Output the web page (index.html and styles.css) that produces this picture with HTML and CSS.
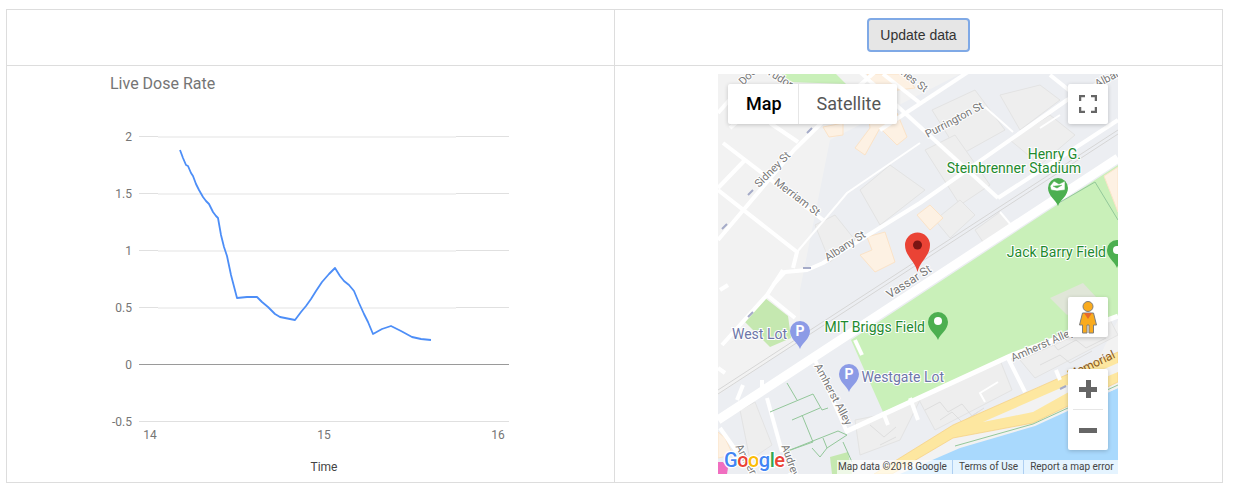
FILE: index.html
```html
<!DOCTYPE html>
<html lang="en">
<head>
    <meta charset="UTF-8">
    <title>Live Dose Rate</title>
    <link rel="stylesheet" href="styles.css">
</head>
<body>
    <table class="layout">
        <tr>
            <td></td>
            <td><button class="btn" type="button">Update data</button></td>
        </tr>
        <tr>
            <td>
                <!-- viewBox uses page coordinates so the chart is easy to read off the design -->
                <svg class="chart" viewBox="60 74 500 400" width="500" height="400">
                    <text class="chart-title" x="110" y="89">Live Dose Rate</text>

                    <g class="grid">
                        <line x1="139" y1="136.5" x2="509" y2="136.5"/>
                        <line x1="139" y1="193.5" x2="509" y2="193.5"/>
                        <line x1="139" y1="250.5" x2="509" y2="250.5"/>
                        <line x1="139" y1="307.5" x2="509" y2="307.5"/>
                        <line x1="139" y1="421.5" x2="509" y2="421.5"/>
                    </g>
                    <g class="grid-inner">
                        <line x1="158" y1="137" x2="456" y2="137"/>
                        <line x1="158" y1="194" x2="456" y2="194"/>
                        <line x1="158" y1="251" x2="456" y2="251"/>
                        <line x1="158" y1="308" x2="456" y2="308"/>
                    </g>
                    <line class="baseline" x1="139" y1="364.5" x2="509" y2="364.5"/>

                    <g class="tick y-tick">
                        <text x="132" y="141">2</text>
                        <text x="132" y="198">1.5</text>
                        <text x="132" y="255">1</text>
                        <text x="132" y="312">0.5</text>
                        <text x="132" y="369">0</text>
                        <text x="132" y="426">-0.5</text>
                    </g>
                    <g class="tick x-tick">
                        <text x="150" y="439">14</text>
                        <text x="324" y="439">15</text>
                        <text x="498" y="439">16</text>
                    </g>
                    <text class="axis-title" x="324" y="471">Time</text>

                    <polyline class="series" points="180,150 183,158 186,165 188,166 191,173 193,176 196,184 199,190 203,197 206,201 209,204 213,212 216,216 218,218 221,235 224,247 227,256 231,275 237,298 247,297 257,297 262,302 268,307 275,314 280,317 295,320 301,312 306,306 311,299 316,291 322,282 329,274 335,268 340,276 344,281 349,285 354,291 359,303 364,314 368,322 373,334 382,329 391,326 401,331 412,337 421,339 431,340"/>
                </svg>
            </td>
            <td>
                <div class="map">
                    <svg class="map-canvas" viewBox="718 74 400 400" width="400" height="400">
                        <defs>
                            <path id="pin" d="M0 18C-2 12-10 8-10 0A10 10 0 0 1 10 0C10 8 2 12 0 18Z"/>
                        </defs>

                        <!-- ground -->
                        <rect class="land" x="718" y="74" width="400" height="400"/>
                        <polygon class="campus" points="800,290 830,140 960,74 1118,74 1118,320 1040,474 718,474 718,395 800,340"/>

                        <!-- buildings -->
                        <g class="building">
                            <polygon points="860,190 890,165 925,190 880,225"/>
                            <polygon points="815,225 835,215 855,240 830,262"/>
                            <polygon points="932,110 975,90 1005,130 960,155"/>
                            <polygon points="925,150 955,135 990,185 960,205"/>
                            <polygon points="1000,95 1040,85 1060,100 1020,130"/>
                            <polygon points="1010,140 1050,115 1075,135 1040,165"/>
                            <polygon points="975,230 1000,212 1012,225 985,245"/>
                            <polygon points="935,220 960,200 975,215 950,238"/>
                            <polygon points="740,410 755,402 772,445 750,460"/>
                            <polygon points="918,398 1000,360 1012,390 935,430"/>
                            <polygon points="1020,360 1110,320 1118,335 1035,378"/>
                            <polygon points="855,420 880,415 920,400 900,440 860,455"/>
                        </g>
                        <g class="building-lines">
                            <path d="M925 410l15-8 8 10 14-8 10 12 12-8M940 420l12-8 10 10 16-10M1030 350l20-10 8 10 18-10 10 8 20-10M1040 365l20-10 10 8 22-12M870 425l14 12 12-10M880 445l16-8"/>
                        </g>
                        <g class="campus-building">
                            <polygon points="823,127 843,123 843,135 829,137"/>
                            <polygon points="855,148 870,128 868,113 897,113 907,137 897,145 880,128 865,155"/>
                            <polygon points="867,237 885,232 895,262 875,272 860,255 872,250"/>
                            <polygon points="917,215 930,205 943,218 930,230"/>
                            <polygon points="867,74 905,74 915,88 880,92"/>
                            <polygon points="718,432 725,438 733,455 718,458"/>
                        </g>

                        <!-- parks -->
                        <polygon class="park" points="851,340 1118,165 1118,316 1010,358 883,412"/>
                        <polygon class="park-small" points="745,322 765,298 788,316 791,338 770,347"/>
                        <polygon class="park" points="782,74 790,82 846,84 836,74"/>
                        <polygon class="park-small" points="830,457 848,452 852,474 832,474"/>
                        <polygon class="campus-building" points="1104,176 1118,167 1118,212"/>
                        <polygon class="park-lot" points="1050,298 1083,283 1097,298 1067,315"/>

                        <!-- water and parkway -->
                        <polygon class="water" points="1033,425 1118,388 1118,474 885,474 955,445"/>
                        <polygon class="shore" points="880,474 953,438 1033,423 1118,382 1118,388 1035,426 960,448 900,474"/>
                        <polygon class="parkway" points="874,474 953,425 1118,352 1118,382 1033,423 953,438 892,474"/>
                        <polygon class="shore" points="983,422 1118,363 1118,372 1067,393 1033,412"/>
                        <polyline class="footpath" points="955,446 1033,424 1118,385"/>

                        <!-- roads -->
                        <g class="road">
                            <polyline points="718,240 794,150 860,85 875,72"/>
                            <polyline points="718,113 747,80"/>
                            <polyline points="723,143 823,220"/>
                            <polyline points="718,190 797,252 793,268"/>
                            <polyline points="745,160 718,188"/>
                            <polyline points="730,128 753,108"/>
                            <polyline points="770,123 798,142"/>
                            <polyline points="860,72 998,198"/>
                            <polyline points="880,130 968,72"/>
                            <polyline points="998,198 1118,120"/>
                            <polyline points="1050,75 1075,95"/>
                            <polyline points="773,285 785,272 807,270 823,263 920,203 1067,100 1118,73"/>
                            <polyline points="883,74 920,103"/>
                            <polyline points="722,345 767,295 783,270"/>
                            <polyline points="767,295 795,318"/>
                            <polyline points="743,385 737,400"/>
                            <polyline points="762,380 762,388"/>
                            <polyline points="718,368 725,373"/>
                            <polyline points="720,290 728,285"/>
                            <polyline points="767,398 782,452"/>
                            <polyline points="720,428 737,452"/>
                            <polyline points="855,340 862,355"/>
                            <polyline points="883,412 888,425"/>
                            <polyline points="910,398 918,420"/>
                            <polyline points="1008,358 1025,392"/>
                            <polyline points="1056,370 1060,380"/>
                            <polyline points="815,360 847,432"/>
                        </g>
                        <g class="road-thin">
                            <polyline points="797,252 847,193 920,143"/>
                            <polyline points="985,107 1013,132"/>
                            <polyline points="1000,212 1012,226"/>
                            <polyline points="1040,128 1060,115"/>
                            <polyline points="985,402 980,393 998,382"/>
                        </g>
                        <polyline class="road-main" points="718,420 1118,158"/>
                        <polyline class="road-side" points="845,432 1010,356 1118,316"/>
                        <polyline class="rail" points="718,390 1118,130"/>
                        <polyline class="rail" points="718,394 1118,134"/>

                        <!-- footpaths -->
                        <g class="footpath">
                            <polyline points="787,383 797,400"/>
                            <polyline points="770,412 813,394 822,410 828,408"/>
                            <polyline points="792,420 820,408"/>
                            <polyline points="802,415 813,442 785,452"/>
                            <polyline points="785,452 838,431 847,435 827,448 820,457 812,448"/>
                            <polyline points="823,438 827,448"/>
                            <polyline points="843,442 852,462"/>
                            <polyline points="1057,204 1095,182 1118,220"/>
                        </g>

                        <!-- one way arrows -->
                        <g class="arrow">
                            <path d="M812 128l-5 5M753 190l-5 5M727 224l-5 5M803 268h8M753 312l-5 5M1066 386l-6 3"/>
                        </g>

                        <!-- street labels -->
                        <g class="street">
                            <text transform="translate(775 172) rotate(-45)">Sidney St</text>
                            <text transform="translate(795 200) rotate(37)">Merriam St</text>
                            <text transform="translate(847 249) rotate(-33)">Albany St</text>
                            <text transform="translate(956 123) rotate(-28)">Purrington St</text>
                            <text class="street-big" transform="translate(911 285) rotate(-33)">Vassar St</text>
                            <text transform="translate(830 396) rotate(62)">Amherst Alley</text>
                            <text transform="translate(1044 348) rotate(-24)">Amherst Alley</text>
                            <text transform="translate(750 79) rotate(-45)">Doc</text>
                            <text transform="translate(778 81) rotate(32)">Tudor</text>
                            <text transform="translate(908 80) rotate(38)">Ames St</text>
                            <text transform="translate(1112 80) rotate(-28)">Albany</text>
                            <text transform="translate(745 465) rotate(62)">Amherst</text>
                            <text transform="translate(787 462) rotate(70)">Audrey</text>
                        </g>
                        <text class="parkway-label" transform="translate(1070 379) rotate(-25)">Memorial</text>

                        <!-- places -->
                        <g class="place-green">
                            <text x="1081" y="159">Henry G.</text>
                            <text x="1081" y="173">Steinbrenner Stadium</text>
                            <text x="1106" y="257">Jack Barry Field</text>
                            <text x="925" y="332">MIT Briggs Field</text>
                        </g>
                        <g class="place-blue">
                            <text x="787" y="339">West Lot</text>
                            <text x="944" y="382">Westgate Lot</text>
                        </g>

                        <use class="pin-green" href="#pin" transform="translate(1058 188)"/>
                        <path class="pin-glyph" d="M1050 186l4-5 5 3 6-3v9l-8 1-6-1zM1053 186l4 2 5-3"/>
                        <use class="pin-green" href="#pin" transform="translate(1117 250)"/>
                        <circle class="pin-dot" cx="1117" cy="250" r="4"/>
                        <use class="pin-green" href="#pin" transform="translate(938 322)"/>
                        <circle class="pin-dot" cx="938" cy="321" r="4"/>
                        <use class="pin-blue" href="#pin" transform="translate(800 331)"/>
                        <text class="pin-letter" x="800" y="336">P</text>
                        <use class="pin-blue" href="#pin" transform="translate(849 374)"/>
                        <text class="pin-letter" x="849" y="379">P</text>

                        <!-- marker -->
                        <path class="marker" d="M917.5 272C915 261 905 256 905 245A12.5 12.5 0 0 1 930 245C930 256 920 261 917.5 272Z"/>
                        <circle class="marker-dot" cx="917.5" cy="245" r="4.5"/>

                        <!-- corner -->
                        <polygon class="pink" points="718,462 723,462 728,468 727,474 718,474"/>
                        <text class="logo" x="724" y="467"><tspan class="g-blue">G</tspan><tspan class="g-red">o</tspan><tspan class="g-yellow">o</tspan><tspan class="g-blue">g</tspan><tspan class="g-green">l</tspan><tspan class="g-red">e</tspan></text>
                    </svg>

                    <div class="map-type">
                        <span class="map-type-item active">Map</span>
                        <span class="map-type-item">Satellite</span>
                    </div>

                    <div class="map-btn fullscreen">
                        <svg viewBox="0 0 18 18" width="18" height="18">
                            <path d="M1 6V1H6M12 1H17V6M17 12V17H12M6 17H1V12"/>
                        </svg>
                    </div>

                    <div class="map-btn pegman">
                        <svg viewBox="0 0 20 34" width="20" height="34">
                            <circle class="peg-skin" cx="10" cy="6.5" r="5"/>
                            <path class="peg-skin" d="M4.5 13H15.5L18.5 25H15.5V33H11V25H9V33H4.5V25H1.5Z"/>
                            <path class="peg-collar" d="M6 13H14L10 19Z"/>
                        </svg>
                    </div>

                    <div class="zoom-ctrl">
                        <div class="zoom-btn"><span class="zoom-plus"></span></div>
                        <div class="zoom-sep"></div>
                        <div class="zoom-btn"><span class="zoom-minus"></span></div>
                    </div>

                    <div class="attribution">
                        <span class="attr-item">Map data ©2018 Google</span>
                        <span class="attr-item">Terms of Use</span>
                        <span class="attr-item">Report a map error</span>
                    </div>
                </div>
            </td>
        </tr>
    </table>
</body>
</html>
```

FILE: styles.css
```css
body {
    margin: 9px 11px 0 6px;
    background: #fff;
    font-family: 'Roboto', sans-serif;
}

.layout {
    width: 1217px;
    border-collapse: collapse;
    table-layout: fixed;
}

.layout td {
    border: 1px solid #ddd;
    padding: 8px;
    text-align: center;
    vertical-align: top;
}

.layout td:first-child {
    width: 591px;
}

.btn {
    display: inline-block;
    width: 103px;
    height: 34px;
    margin-bottom: 5px;
    padding: 0;
    font-family: 'Liberation Sans', Arial, sans-serif;
    font-size: 14px;
    color: #333;
    background: #e6e6e6;
    border: 2px solid #7fa9e6;
    border-radius: 4px;
    vertical-align: top;
}

/* chart */
.chart {
    display: block;
    margin-left: 45px;
    text-align: left;
}

.chart-title {
    font-size: 16px;
    fill: #757575;
}

.grid line {
    stroke: #e0e0e0;
    stroke-width: 1;
}

.grid-inner line {
    stroke: #f1f1f1;
    stroke-width: 2;
}

.baseline {
    stroke: #9a9a9a;
    stroke-width: 1;
}

.tick text {
    font-size: 12px;
    fill: #757575;
}

.y-tick text {
    text-anchor: end;
}

.x-tick text,
.axis-title {
    text-anchor: middle;
}

.axis-title {
    font-size: 12px;
    fill: #444;
}

.series {
    fill: none;
    stroke: #4d8ef7;
    stroke-width: 1.8;
    stroke-linejoin: round;
}

/* map */
.map {
    position: relative;
    width: 400px;
    height: 400px;
    margin-left: 95px;
    overflow: hidden;
    text-align: left;
}

.map-canvas {
    display: block;
}

.map-canvas text {
    font-family: 'Roboto', sans-serif;
}

.land { fill: #f2f2f2; }
.campus { fill: #eceef2; }
.park { fill: #c9f0b9; }
.park-small { fill: #c5e8b0; }
.park-lot { fill: #e0e6d8; }
.water { fill: #a9d9fd; }
.shore { fill: #f2f2f2; }
.pink { fill: #f06ec0; }

.parkway {
    fill: #fde7a0;
    stroke: #f7cf7e;
    stroke-width: 0.7;
}

.building {
    fill: #eeeeee;
    stroke: #e3e3e3;
    stroke-width: 1;
}

.building-lines path {
    fill: none;
    stroke: #dedede;
    stroke-width: 1;
}

.campus-building {
    fill: #fdf1e3;
    stroke: #fbe3c8;
    stroke-width: 1;
}

.road polyline {
    fill: none;
    stroke: #fff;
    stroke-width: 4;
    stroke-linejoin: round;
}

.road-thin polyline {
    fill: none;
    stroke: #fff;
    stroke-width: 2;
}

.road-main {
    fill: none;
    stroke: #fff;
    stroke-width: 9;
}

.road-side {
    fill: none;
    stroke: #fff;
    stroke-width: 5;
}

.rail {
    fill: none;
    stroke: #d6d6d6;
    stroke-width: 1;
}

.footpath,
.footpath polyline {
    fill: none;
    stroke: #93c79a;
    stroke-width: 1;
}

.arrow path {
    fill: none;
    stroke: #a5abc8;
    stroke-width: 2;
}

.street text {
    font-size: 11px;
    fill: #777;
    text-anchor: middle;
    stroke: #fff;
    stroke-width: 2px;
    paint-order: stroke;
}

.street .street-big {
    font-size: 12px;
}

.parkway-label {
    font-size: 12px;
    fill: #8a5a1e;
}

.place-green text,
.place-blue text {
    font-size: 14px;
    text-anchor: end;
    stroke: #fff;
    stroke-width: 2px;
    paint-order: stroke;
}

.place-green text { fill: #1e8a2e; }
.place-blue text { fill: #6d76a8; }

.pin-green { fill: #4caf50; }
.pin-blue { fill: #8c9be6; }
.pin-dot { fill: #fff; }

.pin-glyph {
    fill: #fff;
    stroke: #4caf50;
    stroke-width: 0.6;
}

.pin-letter {
    font-size: 14px;
    font-weight: 700;
    fill: #fff;
    text-anchor: middle;
}

.marker { fill: #ea4335; }
.marker-dot { fill: #7b1513; }

.logo {
    font-size: 20px;
    font-weight: 500;
    letter-spacing: -0.5px;
    stroke: #fff;
    stroke-width: 2.5px;
    paint-order: stroke;
}

.g-blue { fill: #4285f4; }
.g-red { fill: #ea4335; }
.g-yellow { fill: #fbbc05; }
.g-green { fill: #34a853; }

/* map controls */
.map-type {
    position: absolute;
    top: 10px;
    left: 10px;
    display: flex;
    height: 40px;
    background: #fff;
    border-radius: 2px;
    box-shadow: 0 1px 4px rgba(0,0,0,0.2);
    font-size: 18px;
    line-height: 40px;
}

.map-type-item {
    padding: 0 16px 0 18px;
    color: #565656;
}

.map-type-item.active {
    color: #000;
    font-weight: 500;
    border-right: 1px solid #e6e6e6;
    padding-right: 16px;
}

.map-btn {
    position: absolute;
    right: 10px;
    width: 40px;
    height: 40px;
    display: flex;
    align-items: center;
    justify-content: center;
    background: #fff;
    border-radius: 2px;
    box-shadow: 0 1px 4px rgba(0,0,0,0.2);
}

.fullscreen {
    top: 10px;
}

.fullscreen path {
    fill: none;
    stroke: #666;
    stroke-width: 2.5;
}

.pegman {
    top: 223px;
}

.peg-skin {
    fill: #f9ab1e;
    stroke: #7d7d7d;
    stroke-width: 1;
}

.peg-collar {
    fill: #e5692c;
}

.zoom-ctrl {
    position: absolute;
    top: 295px;
    right: 10px;
    width: 40px;
    height: 81px;
    background: #fff;
    border-radius: 2px;
    box-shadow: 0 1px 4px rgba(0,0,0,0.2);
}

.zoom-btn {
    height: 40px;
    display: flex;
    align-items: center;
    justify-content: center;
}

.zoom-sep {
    height: 1px;
    margin: 0 5px;
    background: #e6e6e6;
}

.zoom-plus,
.zoom-minus {
    display: block;
    width: 18px;
    height: 5px;
    background: #666;
}

.zoom-plus {
    position: relative;
}

.zoom-plus::after {
    content: "";
    position: absolute;
    left: 6.5px;
    top: -6.5px;
    width: 5px;
    height: 18px;
    background: #666;
}

.attribution {
    position: absolute;
    right: 0;
    bottom: 0;
    left: 119px;
    display: flex;
    height: 14px;
    background: rgba(255,255,255,0.7);
    font-size: 10px;
    line-height: 14px;
    color: #444;
}

.attr-item {
    padding: 0 5px 0 1px;
    white-space: nowrap;
}

.attr-item + .attr-item {
    padding-left: 6px;
    border-left: 1px solid rgba(120,170,230,0.5);
}
```
